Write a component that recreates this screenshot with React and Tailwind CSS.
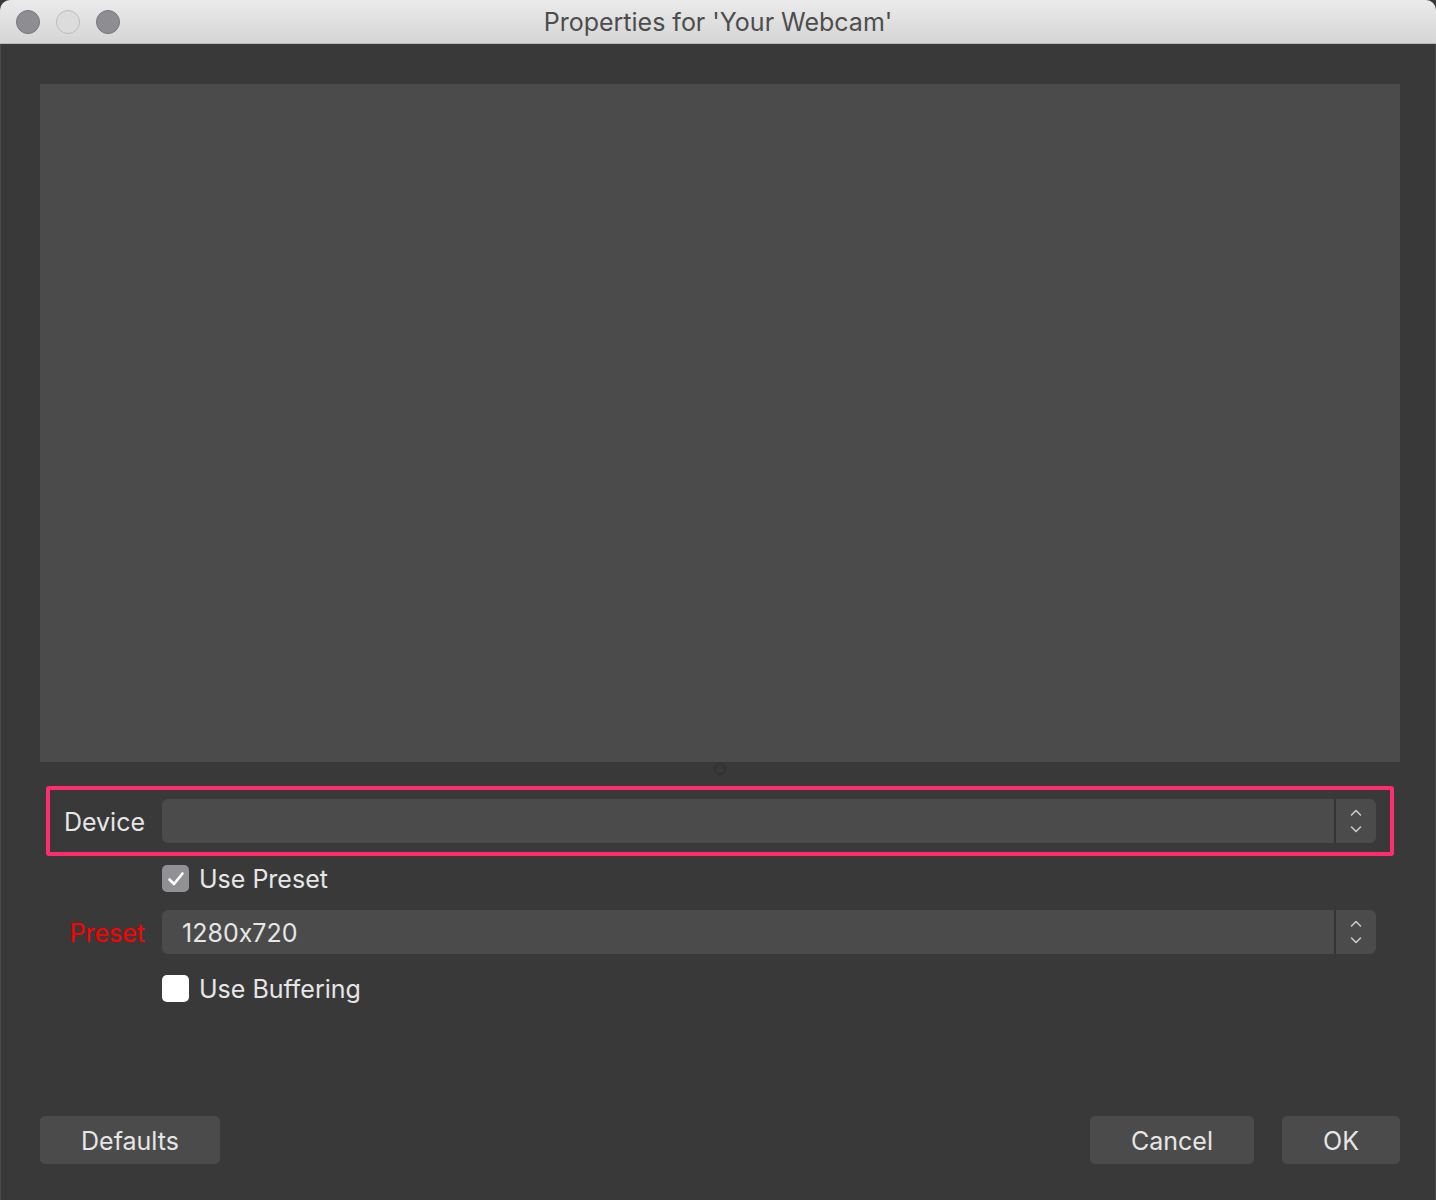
import React from 'react';

const font = { fontFamily: 'Inter, "Noto Sans", "Liberation Sans", sans-serif' };

function Stepper() {
  return (
    <div className="flex w-[42px] items-center justify-center border-l-2 border-[#333333]">
      <svg width="14" height="28" viewBox="0 0 14 28" fill="none" stroke="#c8c8c8" strokeWidth="1.6" strokeLinecap="round" strokeLinejoin="round">
        <path d="M2.5 8 L7 3.5 L11.5 8" />
        <path d="M2.5 20 L7 24.5 L11.5 20" />
      </svg>
    </div>
  );
}

function Combo({ value }) {
  return (
    <div className="flex h-[44px] flex-1 rounded-[6px] bg-[#4b4b4b]">
      <div className="flex flex-1 items-center pl-[20px] pt-[3px] text-[25px] text-[#e6e6e6] [font-feature-settings:'calt'_0]">{value}</div>
      <Stepper />
    </div>
  );
}

export default function App() {
  return (
    <div className="h-[1200px] w-[1436px] bg-[#393939]" style={font}>
      {/* title bar */}
      <div className="relative flex h-[44px] items-center justify-center rounded-t-[10px] border-b border-[#b9b9b9] bg-gradient-to-b from-[#ebebeb] to-[#d5d5d5] pt-[3px]">
        <div className="absolute left-[16px] top-[10px] flex gap-[16px]">
          <div className="h-[24px] w-[24px] rounded-full border border-[#77767a] bg-[#8e8d92]" />
          <div className="h-[24px] w-[24px] rounded-full border border-[#bcbcbc] bg-[#dcdcdc]" />
          <div className="h-[24px] w-[24px] rounded-full border border-[#77767a] bg-[#8e8d92]" />
        </div>
        <span className="text-[25px] text-[#4d4d4d]">Properties for 'Your Webcam'</span>
      </div>

      {/* body */}
      <div className="flex h-[1156px] flex-col border-x border-[#4a4a4a] pl-[39px] pr-[35px] pt-[40px]">
        <div className="h-[678px] bg-[#4b4b4b]" />
        <div className="flex h-[24px] justify-center">
          <div className="mt-[1px] h-[12px] w-[12px] rounded-full border border-[#2f2f2f] bg-[#383838]" />
        </div>

        <div className="mx-[6px] flex h-[70px] items-center rounded-[3px] border-[4px] border-[#fe2e6e] pr-[14px]">
          <div className="w-[112px] pr-[17px] pt-[3px] text-right text-[25px] text-[#e6e6e6]">Device</div>
          <Combo value="" />
        </div>

        <div className="mt-[9px] flex h-[27px] items-center pl-[122px]">
          <div className="flex h-[27px] w-[27px] items-center justify-center rounded-[5px] bg-[#919094]">
            <svg width="18" height="16" viewBox="0 0 18 16" fill="none" stroke="#ffffff" strokeWidth="2.6" strokeLinecap="round" strokeLinejoin="round">
              <path d="M2.5 8.5 L7 13 L15.5 2.5" />
            </svg>
          </div>
          <span className="ml-[10px] pt-[2px] text-[25px] text-[#e6e6e6]">Use Preset</span>
        </div>

        <div className="mt-[18px] flex h-[44px] items-center pr-[24px]">
          <div className="w-[122px] pr-[17px] pt-[3px] text-right text-[25px] text-[#ff0000]">Preset</div>
          <Combo value="1280x720" />
        </div>

        <div className="mt-[21px] flex h-[27px] items-center pl-[122px]">
          <div className="h-[27px] w-[27px] rounded-[5px] bg-white" />
          <span className="ml-[10px] pt-[2px] text-[25px] text-[#e6e6e6]">Use Buffering</span>
        </div>

        <div className="mt-[114px] flex items-center">
          <button className="h-[48px] w-[180px] rounded-[5px] bg-[#4b4b4b] pt-[3px] text-[25px] text-[#e6e6e6]">Defaults</button>
          <div className="flex-1" />
          <button className="h-[48px] w-[164px] rounded-[5px] bg-[#4b4b4b] pt-[3px] text-[25px] text-[#e6e6e6]">Cancel</button>
          <button className="ml-[28px] h-[48px] w-[118px] rounded-[5px] bg-[#4b4b4b] pt-[3px] text-[25px] text-[#e6e6e6]">OK</button>
        </div>
      </div>
    </div>
  );
}
